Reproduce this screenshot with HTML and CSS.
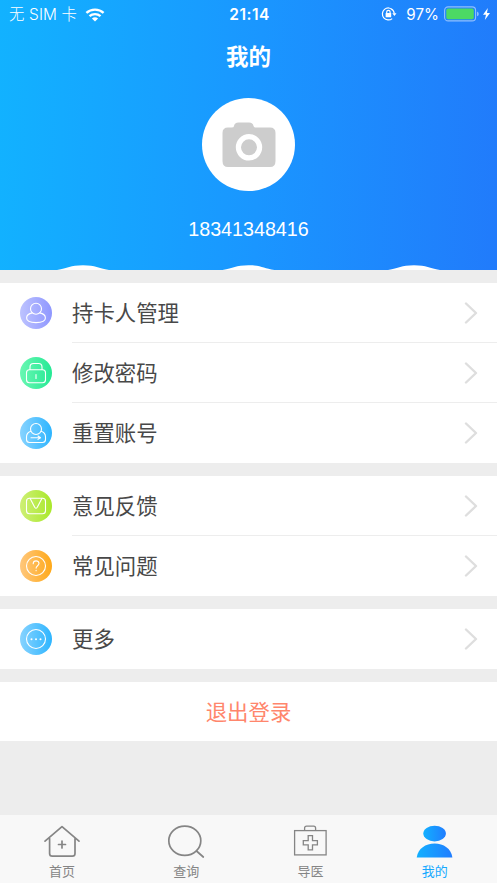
FILE: index.html
```html
<!DOCTYPE html>
<html lang="zh-CN">
<head>
<meta charset="utf-8">
<title>我的</title>
<link rel="stylesheet" href="styles.css">
</head>
<body>
<div class="screen">
  <header class="header">
    <div class="status">
      <div class="status-left">
        <span>无 SIM 卡</span>
        <svg class="wifi" width="20" height="14" viewBox="0 0 20 14" fill="none" stroke="#fff" stroke-width="2.4"><path d="M1.400 4.800C6.200 .5 13.800 .5 18.600 4.800M4.500 8.200C7.700 5.400 12.300 5.400 15.500 8.200"/><path d="M10 13.500L6.900 10.500Q10 8.100 13.100 10.500Z" fill="#fff" stroke="none"/></svg>
      </div>
      <div class="status-time">21:14</div>
      <div class="status-right">
        <svg class="lock" width="16" height="14" viewBox="0 0 16 14" fill="none" stroke="#fff" stroke-width="1.200"><path d="M11.900 3A6 6 0 1 0 11.200 11.600M9.800 1.700A6 6 0 0 1 13.300 6.500"/><path d="M11.300 6.300h4.200l-2.100 2.800z" fill="#fff" stroke="none"/><rect x="4.600" y="6" width="5.600" height="4.200" rx=".5" fill="#fff" stroke="none"/><path d="M5.700 6.300V5a1.700 1.700 0 0 1 3.400 0v1.300"/></svg>
        <span class="percent">97%</span>
        <svg class="battery" width="47" height="16" viewBox="0 0 47 16"><rect x=".6" y=".9" width="31" height="14" rx="3.500" fill="none" stroke="#fff" stroke-opacity=".5" stroke-width="1.100"/><rect x="2.300" y="2.600" width="27.500" height="10.600" rx="1.800" fill="#4cd964"/><path d="M33 5.500q1.800.7 1.800 2.400T33 10.300z" fill="#fff" fill-opacity=".5"/><path d="M43.800 2L39 8.800h3L40.800 14 46 6.900h-3z" fill="#fff"/></svg>
      </div>
    </div>
    <h1 class="title">我的</h1>
    <div class="avatar">
      <svg width="54" height="46" viewBox="0 0 54 46"><path d="M6 5.500h3.500q2.500 0 2.500-1.500Q12.500.5 16.500.5H27q4 0 4.500 3.500 .3 1.500 2.500 1.500H48q5.500 0 5.500 5.500V39q0 6-5.500 6H6q-5.500 0-5.500-6V11Q.5 5.500 6 5.500Z" fill="#cdcdcd"/><circle cx="27" cy="25.300" r="10.600" fill="#cdcdcd" stroke="#fff" stroke-width="5.200"/></svg>
    </div>
    <div class="phone">18341348416</div>
    <svg class="waves" width="497" height="5" viewBox="0 0 497 5" fill="#fff"><path d="M57 5C68 3.500 70 .3 83 .3S98 3.500 109 5ZM222.500 5C233.500 3.500 235.500 .3 248.500 .3S263.500 3.500 274.500 5ZM388 5C399 3.500 401 .3 414 .3S429 3.500 440 5Z"/></svg>
  </header>

  <main class="content">
    <section class="group">
      <div class="row">
        <svg class="icon" viewBox="0 0 32 32"><defs><linearGradient id="violet"><stop stop-color="#bdc3ff"/><stop offset="1" stop-color="#8f97ff"/></linearGradient></defs><circle cx="16" cy="16" r="16" fill="url(#violet)"/><g class="line"><circle cx="16" cy="11.800" r="5.500"/><path d="M12.300 15.900C8.500 16.600 6.600 18.800 6.600 21c0 3.200 4 4.600 9.400 4.600s9.400-1.400 9.400-4.600c0-2.200-1.900-4.400-5.700-5.100"/></g></svg>
        <div class="cell"><span>持卡人管理</span><svg class="chevron" viewBox="0 0 14 22"><path d="M2 1.500L12 11 2 20.500"/></svg></div>
      </div>
      <div class="row">
        <svg class="icon" viewBox="0 0 32 32"><defs><linearGradient id="green"><stop stop-color="#69f7b2"/><stop offset="1" stop-color="#25e995"/></linearGradient></defs><circle cx="16" cy="16" r="16" fill="url(#green)"/><g class="line"><rect x="6.500" y="12.700" width="19" height="13" rx="3"/><path d="M10 12.500v-2.500q0-3.500 3.500-3.500h5q3.500 0 3.500 3.500v2.500M16 17.500v4"/></g></svg>
        <div class="cell"><span>修改密码</span><svg class="chevron" viewBox="0 0 14 22"><path d="M2 1.500L12 11 2 20.500"/></svg></div>
      </div>
      <div class="row">
        <svg class="icon" viewBox="0 0 32 32"><defs><linearGradient id="blue"><stop stop-color="#87d3ff"/><stop offset="1" stop-color="#2eb5ff"/></linearGradient></defs><circle cx="16" cy="16" r="16" fill="url(#blue)"/><g class="line"><circle cx="16" cy="12" r="5.500"/><path d="M10.800 14.200Q6.500 15.500 6.500 20v2.500q0 3 3 3h13q3 0 3-3V20q0-4.500-4.300-5.800M11 20.700h9.500M18 19l2.500 1.700L18 22.400"/></g></svg>
        <div class="cell"><span>重置账号</span><svg class="chevron" viewBox="0 0 14 22"><path d="M2 1.500L12 11 2 20.500"/></svg></div>
      </div>
    </section>
    <section class="group">
      <div class="row">
        <svg class="icon" viewBox="0 0 32 32"><defs><linearGradient id="lime"><stop stop-color="#ceef75"/><stop offset="1" stop-color="#a9e82b"/></linearGradient></defs><circle cx="16" cy="16" r="16" fill="url(#lime)"/><g class="line"><rect x="6.500" y="8.300" width="19" height="15.400" rx="3"/><path d="M10 8.300l4.700 9q1.300 2 2.600 0L22 8.300"/></g></svg>
        <div class="cell"><span>意见反馈</span><svg class="chevron" viewBox="0 0 14 22"><path d="M2 1.500L12 11 2 20.500"/></svg></div>
      </div>
      <div class="row">
        <svg class="icon" viewBox="0 0 32 32"><defs><linearGradient id="orange"><stop stop-color="#ffc77c"/><stop offset="1" stop-color="#ffa919"/></linearGradient></defs><circle cx="16" cy="16" r="16" fill="url(#orange)"/><g class="line"><circle cx="16" cy="16" r="9.500"/><path d="M13.200 13.800c0-4 5.800-3.700 5.800-.3 0 2.200-2.900 2.300-2.900 4.600M16.100 20.400v.3"/></g></svg>
        <div class="cell"><span>常见问题</span><svg class="chevron" viewBox="0 0 14 22"><path d="M2 1.500L12 11 2 20.500"/></svg></div>
      </div>
    </section>
    <section class="group">
      <div class="row">
        <svg class="icon" viewBox="0 0 32 32"><circle cx="16" cy="16" r="16" fill="url(#blue)"/><circle class="line" cx="16" cy="16" r="9.500"/><g fill="#fff"><circle cx="11.500" cy="16.200" r="1"/><circle cx="16" cy="16.200" r="1"/><circle cx="20.500" cy="16.200" r="1"/></g></svg>
        <div class="cell"><span>更多</span><svg class="chevron" viewBox="0 0 14 22"><path d="M2 1.500L12 11 2 20.500"/></svg></div>
      </div>
    </section>
    <div class="logout">退出登录</div>
  </main>

  <nav class="tabs">
    <div class="tab">
      <svg viewBox="0 0 38 36"><path d="M2 17.200L19 2.600l17 14.600M6.600 14.500v15q0 2.700 2.700 2.700h20q2.700 0 2.700-2.700v-15M19 17v7M15.500 20.500h7"/></svg>
      <span>首页</span>
    </div>
    <div class="tab">
      <svg viewBox="0 0 38 36"><ellipse cx="17.800" cy="16.700" rx="16" ry="14.600"/><path d="M29.500 27l6.800 6"/></svg>
      <span>查询</span>
    </div>
    <div class="tab">
      <svg class="thin" viewBox="0 0 38 36"><rect x="2.600" y="6.600" width="31.500" height="24.300"/><path d="M12.600 6.400V4.200q0-2 2-2h7q2 0 2 2V6.400M16.200 11.700h4.300v4.900h4.900v4.300h-4.900v4.900h-4.300v-4.900h-4.900v-4.300h4.900z"/></svg>
      <span>导医</span>
    </div>
    <div class="tab active">
      <svg viewBox="0 0 38 36"><defs><linearGradient id="person"><stop stop-color="#12b0ff"/><stop offset="1" stop-color="#217dff"/></linearGradient></defs><g fill="url(#person)" stroke="none"><ellipse cx="18.600" cy="9.600" rx="11.300" ry="7.800"/><path d="M.7 33.600C2 24.600 9.600 19.600 18.600 19.600s16.500 5 17.800 14z"/></g></svg>
      <span>我的</span>
    </div>
  </nav>
</div>
</body>
</html>
```
FILE: styles.css
```css
* { box-sizing: border-box; }
body {
  margin: 0;
  background: #ededed;
  font-family: "Liberation Sans", "Noto Sans CJK SC", sans-serif;
}
svg { display: block; flex: none; }
.screen { display: flex; flex-direction: column; width: 497px; height: 883px; overflow: hidden; }

.header {
  display: flex;
  flex-direction: column;
  align-items: center;
  height: 270px;
  flex: none;
  color: #fff;
  background: linear-gradient(92deg, #12b2ff, #1a96ff 52%, #217bfb);
}
.status {
  display: grid;
  grid-template-columns: 1fr auto 1fr;
  align-items: center;
  width: 100%;
  height: 28px;
  padding: 0 6px 0 9px;
  font-family: Inter, "Noto Sans CJK SC", sans-serif;
  font-size: 15.5px;
  line-height: 28px;
}
.status-left, .status-right { display: flex; align-items: center; font-weight: 300; }
.status-left { gap: 8px; padding-top: 1px; line-height: 27px; font-size: 15.4px; letter-spacing: .15px; }
.status-time { margin-right: 1px; padding-top: 1px; line-height: 27px; font-weight: 600; font-size: 15.5px; letter-spacing: .5px; }
.status-right { justify-content: flex-end; }
.percent { margin: 0 5px 0 9px; padding-top: 1px; line-height: 27px; font-weight: 400; font-size: 15.2px; }
.title { margin: 9px 0 0; font: bold 22.5px/36px "Noto Sans CJK SC", sans-serif; }
.avatar {
  display: flex;
  align-items: center;
  justify-content: center;
  width: 93px;
  height: 93px;
  margin-top: 25px;
  border-radius: 50%;
  background: #fff;
}
.phone { margin-top: 26px; font-size: 19.7px; line-height: 24px; }
.waves { margin-top: auto; }

.content { display: flex; flex-direction: column; gap: 13px; padding-top: 13px; flex: 1; }
.group { background: #fff; }
.row { display: flex; align-items: center; height: 60px; padding-left: 20px; }
.icon { width: 32px; height: 32px; margin-right: 20px; }
.line { fill: none; stroke: #fff; stroke-width: 1.1; stroke-linecap: round; stroke-linejoin: round; }
.cell {
  display: flex;
  align-items: center;
  justify-content: space-between;
  flex: 1;
  height: 100%;
  padding-right: 19px;
  padding-top: 1px;
  border-bottom: 1px solid #ededed;
  color: #484848;
  font: 21.4px/30px "Noto Sans CJK SC", sans-serif;
}
.cell span { margin-top: -2px; }
.row:last-child .cell { border-bottom-color: #fff; }
.chevron { width: 14px; height: 22px; fill: none; stroke: #dedede; stroke-width: 2.4; stroke-linecap: round; stroke-linejoin: round; }
.logout {
  height: 59px;
  background: #fff;
  color: #ff866c;
  text-align: center;
  font: 21.4px/57px "Noto Sans CJK SC", sans-serif;
}

.tabs { display: grid; grid-template-columns: repeat(4, 1fr); height: 68px; flex: none; background: #f8f8f8; }
.tab {
  display: flex;
  flex-direction: column;
  align-items: center;
  padding-top: 9px;
  color: #858585;
  font: 13px/18px "Noto Sans CJK SC", sans-serif;
}
.tab svg { width: 38px; height: 36px; margin-bottom: 2px; fill: none; stroke: #858585; stroke-width: 1.7; stroke-linecap: round; stroke-linejoin: round; }
.tab .thin { stroke-width: 1.3; stroke-linejoin: miter; }
.active { color: #15a9ff; }
```
